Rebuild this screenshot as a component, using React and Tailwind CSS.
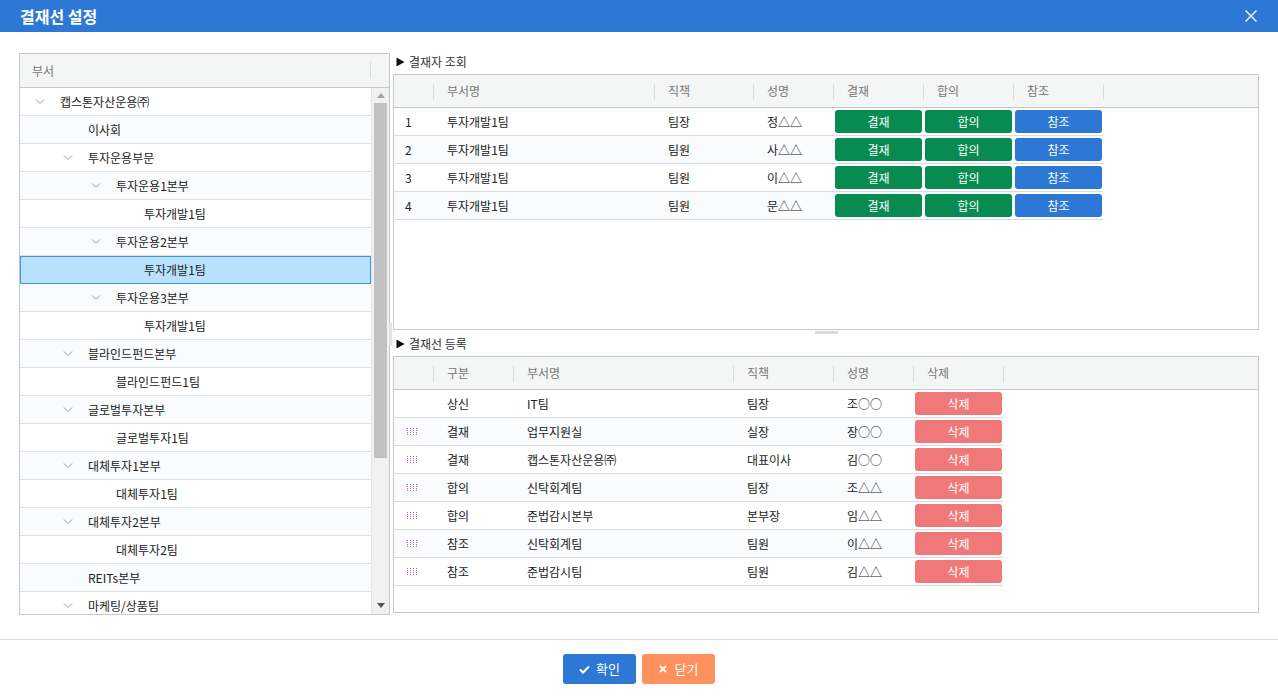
import React from "react";

const FONT = { fontFamily: '"Noto Sans CJK KR", "Noto Sans", sans-serif' };

const tree = [
  { l: 0, t: "캡스톤자산운용㈜", c: true },
  { l: 1, t: "이사회" },
  { l: 1, t: "투자운용부문", c: true },
  { l: 2, t: "투자운용1본부", c: true },
  { l: 3, t: "투자개발1팀" },
  { l: 2, t: "투자운용2본부", c: true },
  { l: 3, t: "투자개발1팀", sel: true },
  { l: 2, t: "투자운용3본부", c: true },
  { l: 3, t: "투자개발1팀" },
  { l: 1, t: "블라인드펀드본부", c: true },
  { l: 2, t: "블라인드펀드1팀" },
  { l: 1, t: "글로벌투자본부", c: true },
  { l: 2, t: "글로벌투자1팀" },
  { l: 1, t: "대체투자1본부", c: true },
  { l: 2, t: "대체투자1팀" },
  { l: 1, t: "대체투자2본부", c: true },
  { l: 2, t: "대체투자2팀" },
  { l: 1, t: "REITs본부" },
  { l: 1, t: "마케팅/상품팀", c: true },
];

const approvers = [
  ["1", "투자개발1팀", "팀장", "정△△"],
  ["2", "투자개발1팀", "팀원", "사△△"],
  ["3", "투자개발1팀", "팀원", "이△△"],
  ["4", "투자개발1팀", "팀원", "문△△"],
];

const lines = [
  [false, "상신", "IT팀", "팀장", "조○○"],
  [true, "결재", "업무지원실", "실장", "장○○"],
  [true, "결재", "캡스톤자산운용㈜", "대표이사", "김○○"],
  [true, "합의", "신탁회계팀", "팀장", "조△△"],
  [true, "합의", "준법감시본부", "본부장", "임△△"],
  [true, "참조", "신탁회계팀", "팀원", "이△△"],
  [true, "참조", "준법감시팀", "팀원", "김△△"],
];

function Chevron() {
  return (
    <svg width="10" height="6" viewBox="0 0 10 6" className="shrink-0">
      <path d="M1 0.5 L5 4.5 L9 0.5" fill="none" stroke="#9a9a9a" strokeWidth="1" />
    </svg>
  );
}

function Grip() {
  return (
    <svg width="11" height="8" viewBox="0 0 11 8">
      {[0, 3, 6, 9].map((x) =>
        [0, 2, 4, 6].map((y) => (
          <rect key={x + "-" + y} x={x} y={y} width="1" height="1" fill="#b06cc0" />
        ))
      )}
    </svg>
  );
}

function Tri() {
  return (
    <svg width="9" height="10" viewBox="0 0 9 10" className="mr-[4px] shrink-0">
      <path d="M0.5 0.5 L8.5 5 L0.5 9.5 Z" fill="#111" />
    </svg>
  );
}

function HeadCell({ w, children, first }) {
  return (
    <div className="flex items-center h-full relative shrink-0" style={{ width: w }}>
      {!first && <div className="absolute left-0 top-[9px] h-[16px] w-px bg-[#d9dcdf]" />}
      <span className="pl-[14px] text-[#777]">{children}</span>
    </div>
  );
}

function Btn({ color, children }) {
  return (
    <div className="h-full flex items-center shrink-0 w-[90px] pl-[2px]">
      <div
        className={`w-[87px] h-[23px] rounded-[3px] flex items-center justify-center text-white text-[12px] ${color}`}
      >
        {children}
      </div>
    </div>
  );
}

export default function App() {
  return (
    <div className="w-[1278px] h-[698px] bg-white flex flex-col text-[12px] text-[#222]" style={FONT}>
      {/* title bar */}
      <div className="h-[32px] bg-[#2c78d4] flex items-center justify-between pl-[20px] pr-[21px] shrink-0">
        <span className="text-white font-bold text-[16px] leading-none">결재선 설정</span>
        <svg width="12" height="12" viewBox="0 0 12 12">
          <path d="M0.5 0.5 L11.5 11.5 M11.5 0.5 L0.5 11.5" stroke="#fff" strokeWidth="1.3" />
        </svg>
      </div>

      {/* body */}
      <div className="flex pt-[21px] pl-[19px] pr-[19px] h-[582px] shrink-0 relative">
        {/* left tree */}
        <div className="w-[371px] h-[562px] border border-[#c4c8cc] flex flex-col shrink-0">
          <div className="h-[34px] bg-[#f4f5f5] border-b border-[#c4c8cc] flex items-center relative shrink-0">
            <span className="pl-[12px] text-[#777]">부서</span>
            <div className="absolute left-[350px] top-[8px] h-[16px] w-px bg-[#d9dcdf]" />
          </div>
          <div className="flex flex-1 overflow-hidden">
            <div className="w-[351px] overflow-hidden">
              {tree.map((r, i) => (
                <div
                  key={i}
                  className={`h-[28px] flex items-center ${
                    r.sel
                      ? "bg-[#b9e3fd] border border-[#3b95e0]"
                      : `border-b border-[#dde1e6] ${i % 2 === 1 ? "bg-[#f9fbfd]" : "bg-white"}`
                  }`}
                >
                  <div className="flex items-center" style={{ paddingLeft: 15 + 28 * r.l - (r.sel ? 1 : 0) }}>
                    <div className="w-[25px] flex items-center">{r.c && <Chevron />}</div>
                    <span className="whitespace-nowrap">{r.t}</span>
                  </div>
                </div>
              ))}
            </div>
            <div className="w-[18px] bg-[#f1f1f1] flex flex-col items-center shrink-0 border-l border-[#e6e6e6]">
              <div className="h-[15px] flex items-center justify-center">
                <svg width="8" height="5" viewBox="0 0 8 5">
                  <path d="M0 5 L4 0 L8 5 Z" fill="#a3a3a3" />
                </svg>
              </div>
              <div className="w-[13px] h-[355px] bg-[#c1c1c1]" />
              <div className="flex-1" />
              <div className="h-[17px] flex items-center justify-center">
                <svg width="8" height="5" viewBox="0 0 8 5">
                  <path d="M0 0 L8 0 L4 5 Z" fill="#505050" />
                </svg>
              </div>
            </div>
          </div>
        </div>

        {/* left splitter knob */}
        <div className="absolute left-[389px] top-[291px] w-[3px] h-[22px] bg-[#dfe2e6]" />

        {/* right */}
        <div className="ml-[3px] w-[866px] flex flex-col shrink-0">
          <div className="h-[21px] flex items-center pl-[3px] pb-[4px] shrink-0">
            <Tri />
            <span className="text-[#333]">결재자 조회</span>
          </div>
          <div className="h-[256px] border border-[#c4c8cc] flex flex-col shrink-0">
            <div className="h-[33px] bg-[#f4f5f5] border-b border-[#c4c8cc] flex shrink-0">
              <HeadCell w={39} first />
              <HeadCell w={221}>부서명</HeadCell>
              <HeadCell w={99}>직책</HeadCell>
              <HeadCell w={80}>성명</HeadCell>
              <HeadCell w={90}>결재</HeadCell>
              <HeadCell w={90}>합의</HeadCell>
              <HeadCell w={90}>참조</HeadCell>
              <div className="relative">
                <div className="absolute left-0 top-[9px] h-[16px] w-px bg-[#d9dcdf]" />
              </div>
            </div>
            <div className="w-[709px]">
              {approvers.map((r, i) => (
                <div
                  key={i}
                  className={`h-[28px] flex items-center border-b border-[#d8dce0] ${
                    i % 2 === 1 ? "bg-[#f9fbfd]" : "bg-white"
                  }`}
                >
                  <div className="w-[39px] pl-[11px] shrink-0">{r[0]}</div>
                  <div className="w-[221px] pl-[14px] shrink-0">{r[1]}</div>
                  <div className="w-[99px] pl-[14px] shrink-0">{r[2]}</div>
                  <div className="w-[80px] pl-[14px] shrink-0">{r[3]}</div>
                  <Btn color="bg-[#088b51]">결재</Btn>
                  <Btn color="bg-[#088b51]">합의</Btn>
                  <Btn color="bg-[#2c78d4]">참조</Btn>
                </div>
              ))}
            </div>
          </div>

          <div className="h-[6px] relative shrink-0">
            <div className="absolute left-[422px] top-[1px] w-[23px] h-[3px] bg-[#d7dade]" />
          </div>

          <div className="h-[20px] flex items-center pl-[3px] pb-[4px] shrink-0">
            <Tri />
            <span className="text-[#333]">결재선 등록</span>
          </div>
          <div className="h-[257px] border border-[#c4c8cc] flex flex-col shrink-0">
            <div className="h-[33px] bg-[#f4f5f5] border-b border-[#c4c8cc] flex shrink-0">
              <HeadCell w={39} first />
              <HeadCell w={80}>구분</HeadCell>
              <HeadCell w={220}>부서명</HeadCell>
              <HeadCell w={100}>직책</HeadCell>
              <HeadCell w={80}>성명</HeadCell>
              <HeadCell w={90}>삭제</HeadCell>
              <div className="relative">
                <div className="absolute left-0 top-[9px] h-[16px] w-px bg-[#d9dcdf]" />
              </div>
            </div>
            <div className="w-[609px]">
              {lines.map((r, i) => (
                <div
                  key={i}
                  className={`h-[28px] flex items-center border-b border-[#d8dce0] ${
                    i % 2 === 1 ? "bg-[#f9fbfd]" : "bg-white"
                  }`}
                >
                  <div className="w-[39px] pl-[13px] shrink-0 flex items-center">{r[0] && <Grip />}</div>
                  <div className="w-[80px] pl-[14px] shrink-0">{r[1]}</div>
                  <div className="w-[220px] pl-[14px] shrink-0">{r[2]}</div>
                  <div className="w-[100px] pl-[14px] shrink-0">{r[3]}</div>
                  <div className="w-[80px] pl-[14px] shrink-0">{r[4]}</div>
                  <Btn color="bg-[#f07878]">삭제</Btn>
                </div>
              ))}
            </div>
          </div>
        </div>
      </div>

      {/* footer */}
      <div className="mt-[25px] border-t border-[#dcdcdc] flex justify-center gap-[6px] pt-[14px]">
        <div className="w-[73px] h-[30px] rounded-[3px] bg-[#2c78d4] flex items-center justify-center text-white text-[13px]">
          <svg width="11" height="9" viewBox="0 0 11 9" className="mr-[6px]">
            <path d="M1 4.5 L4 7.5 L10 1.5" fill="none" stroke="#fff" strokeWidth="2" />
          </svg>
          확인
        </div>
        <div className="w-[73px] h-[30px] rounded-[3px] bg-[#fe915e] flex items-center justify-center text-white text-[13px]">
          <svg width="8" height="8" viewBox="0 0 8 8" className="mr-[8px]">
            <path d="M1 1 L7 7 M7 1 L1 7" fill="none" stroke="#fff" strokeWidth="1.8" />
          </svg>
          닫기
        </div>
      </div>
    </div>
  );
}
